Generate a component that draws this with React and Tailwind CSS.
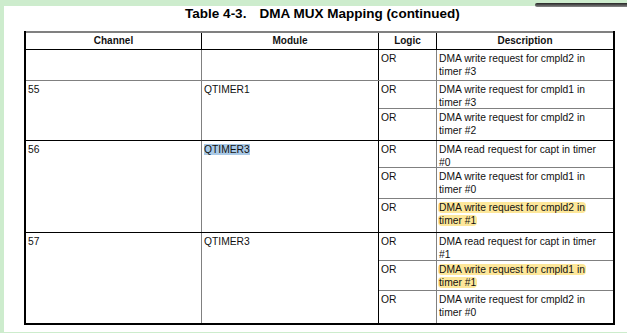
import React from 'react';

const GRAY = 'border-[#808080]';

const groups = [
  {
    channel: '',
    module: '',
    top: '',
    rows: [
      { h: 'h-[30px]', lines: ['DMA write request for cmpld2 in', 'timer #3'] },
    ],
  },
  {
    channel: '55',
    module: 'QTIMER1',
    top: 'border-t border-[#808080]',
    rows: [
      { h: 'h-[27px]', lines: ['DMA write request for cmpld1 in', 'timer #3'] },
      { h: 'h-[32px]', lines: ['DMA write request for cmpld2 in', 'timer #2'] },
    ],
  },
  {
    channel: '56',
    module: 'QTIMER3',
    selected: true,
    top: 'border-t border-black',
    rows: [
      { h: 'h-[26px]', lines: ['DMA read request for capt in timer', '#0'] },
      { h: 'h-[31px]', lines: ['DMA write request for cmpld1 in', 'timer #0'] },
      { h: 'h-[34px]', lines: ['DMA write request for cmpld2 in', 'timer #1'], marked: true },
    ],
  },
  {
    channel: '57',
    module: 'QTIMER3',
    top: 'border-t border-black',
    rows: [
      { h: 'h-[27px]', lines: ['DMA read request for capt in timer', '#1'] },
      { h: 'h-[30px]', lines: ['DMA write request for cmpld1 in', 'timer #1'], marked: true },
      { h: 'h-[33px]', lines: ['DMA write request for cmpld2 in', 'timer #0'] },
    ],
  },
];

const SubRow = ({ row, first }) => (
  <div className={`flex ${row.h} ${first ? '' : `border-t ${GRAY}`}`}>
    <div className="w-[57px] px-[2px] pt-[3px]">OR</div>
    <div className={`w-[177px] border-l ${GRAY} pl-[2px] pt-[3px]`}>
      {row.lines.map((line) => (
        <div key={line} className="whitespace-nowrap">
          {row.marked ? (
            <span className="bg-[#fde79a] rounded-[4px] px-[1px] -ml-[1px]">{line}</span>
          ) : (
            line
          )}
        </div>
      ))}
    </div>
  </div>
);

export default function App() {
  return (
    <div
      className="relative w-[627px] h-[333px] bg-[#cdeccd] pt-[3px] pl-[4px] overflow-hidden"
      style={{ fontFamily: '"Liberation Sans", Arial, sans-serif' }}
    >
      {/* dark strip at top right */}
      <div className="absolute left-[535px] top-[3px] w-[92px] h-[4px] rounded-l-[2px] bg-gradient-to-b from-[#262626] to-[#8a8a8a]" />

      <div className="w-[623px] h-[326px] bg-white pl-[20px]">
        {/* Title */}
        <div className="w-[591px] h-[16px] mt-[3px] mb-[9px] flex justify-center text-[13.5px] leading-[16px] font-bold text-black pl-[6px]">
          <span>Table 4-3.</span>
          <span className="ml-[13px]">DMA MUX Mapping (continued)</span>
        </div>

        {/* Table */}
        <div className="w-[591px] border-l-2 border-r-2 border-b-2 border-black text-[10.3px] leading-[12.5px] text-[#111]">
          {/* Header */}
          <div className={`flex h-[19px] border-t-2 ${GRAY} border-b border-b-black text-[10px] font-bold items-center`}>
            <div className="w-[175px] text-center">Channel</div>
            <div className="w-[177px] h-full border-l border-black flex items-center justify-center">Module</div>
            <div className="w-[58px] h-full border-l border-black flex items-center justify-center">Logic</div>
            <div className="w-[177px] h-full border-l border-black flex items-center justify-center">Description</div>
          </div>

          {groups.map((g, i) => (
            <div key={i} className={`flex ${g.top}`}>
              <div className="w-[175px] pl-[2px] pt-[3px]">{g.channel}</div>
              <div className={`w-[177px] border-l ${GRAY} pl-[2px] pt-[3px]`}>
                {g.selected ? <span className="bg-[#a9c9e6]">{g.module}</span> : g.module}
              </div>
              <div className="w-[235px] border-l border-black">
                {g.rows.map((row, j) => (
                  <SubRow key={j} row={row} first={j === 0} />
                ))}
              </div>
            </div>
          ))}
        </div>
      </div>
    </div>
  );
}
